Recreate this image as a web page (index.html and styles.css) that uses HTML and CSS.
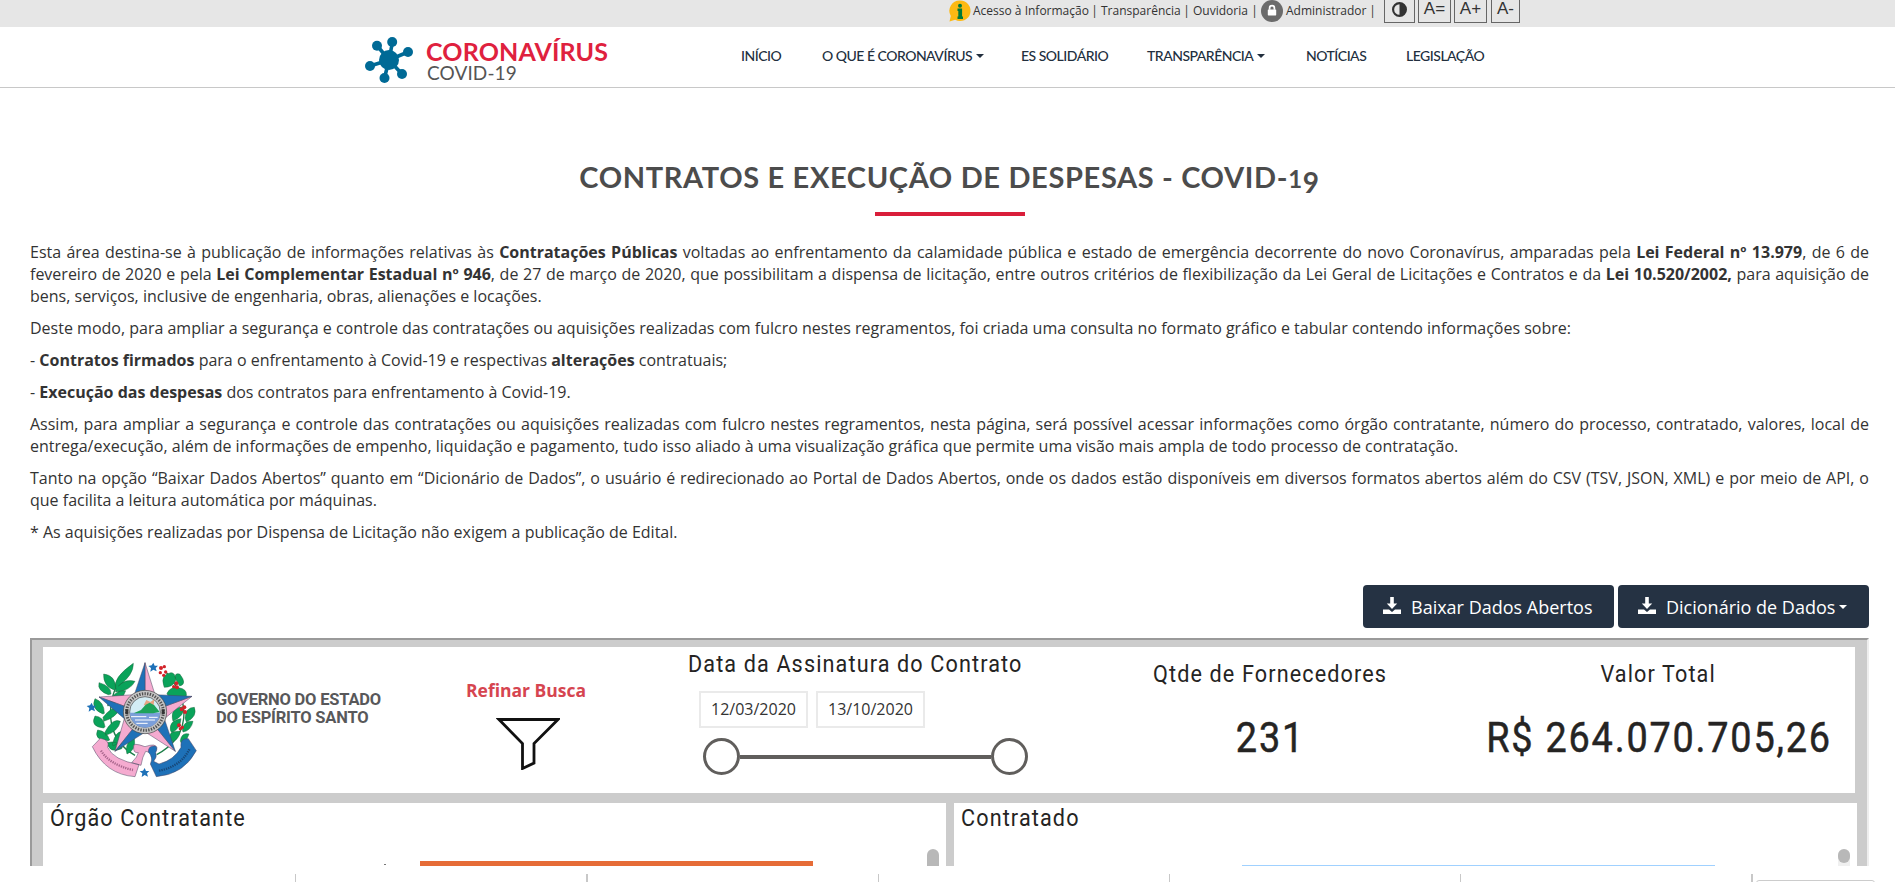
FILE: index.html
```html
<!DOCTYPE html>
<html lang="pt-br">
<head>
<meta charset="utf-8">
<title>Contratos e Execução de Despesas - COVID-19</title>
<link rel="stylesheet" href="styles.css">
</head>
<body>
<div class="topbar">
  <svg class="info-icon" viewBox="0 0 22 22"><path fill="#fdb913" d="M11.2.5a10.3 10.3 0 1 1-5 19.3L.5 21.5 1.800 16A10.300 10.300 0 0 1 11.200.5z"/><path fill="#00793a" d="M8.500 8.600h4.600v8h.9V19H8.500v-2.400h.8v-5.500h-.8z"/><circle cx="11" cy="5.800" r="2" fill="#00793a"/></svg>
  <a class="t-acesso">Acesso à Informação</a><i>|</i><a class="t-transp">Transparência</a><i>|</i><a class="t-ouv">Ouvidoria</a><i>|</i>
  <svg class="lock-icon" viewBox="0 0 22 22"><circle cx="11" cy="11" r="11" fill="#6b6b6b"/><rect x="6.800" y="9.400" width="8.400" height="6" rx=".6" fill="#fff"/><path d="M8.600 9.800V8a2.400 2.400 0 0 1 4.800 0v1.800" fill="none" stroke="#fff" stroke-width="1.700"/></svg>
  <a class="t-adm">Administrador</a><i>|</i>
  <div class="tools">
    <span class="tool w31"><svg class="contrast" viewBox="0 0 14 14"><circle cx="7" cy="7" r="6" fill="none" stroke="#333" stroke-width="2"/><path d="M7 1a6 6 0 0 1 0 12z" fill="#333"/></svg></span>
    <span class="tool w33">A=</span><span class="tool w33">A+</span><span class="tool w29">A-</span>
  </div>
</div>
<header class="header">
  <div class="brand">
    <svg class="virus" viewBox="0 0 48 46"><g stroke="#006a96" stroke-width="3.600" fill="#006a96"><path d="M24 23 27.500 5M24 23 12 8.500M24 23 43 15M24 23 5 29M24 23 19.500 41M24 23 37 37"/></g><g fill="#006a96"><circle cx="24" cy="23" r="10"/><circle cx="27.200" cy="5" r="5"/><circle cx="12" cy="8.800" r="5"/><circle cx="43" cy="15" r="5"/><circle cx="5" cy="29" r="5"/><circle cx="19.500" cy="41" r="5"/><circle cx="37" cy="37" r="5"/></g></svg>
    <div class="brand-text"><b>CORONAVÍRUS</b><span>COVID-19</span></div>
  </div>
  <nav class="nav">
    <a class="n1">INÍCIO</a><a class="n2">O QUE É CORONAVÍRUS<u></u></a><a class="n3">ES SOLIDÁRIO</a><a class="n4">TRANSPARÊNCIA<u></u></a><a class="n5">NOTÍCIAS</a><a class="n6">LEGISLAÇÃO</a>
  </nav>
</header>
<main class="content">
  <h1 class="title">CONTRATOS E EXECUÇÃO DE DESPESAS - COVID-<span class="one">1</span><span class="nine">9</span></h1>
  <div class="rule"></div>
  <div class="text">
    <p>Esta área destina-se à publicação de informações relativas às <b>Contratações Públicas</b> voltadas ao enfrentamento da calamidade pública e estado de emergência decorrente do novo Coronavírus, amparadas pela <b>Lei Federal nº 13.979</b>, de 6 de fevereiro de 2020 e pela <b>Lei Complementar Estadual nº 946</b>, de 27 de março de 2020, que possibilitam a dispensa de licitação, entre outros critérios de flexibilização da Lei Geral de Licitações e Contratos e da <b>Lei 10.520/2002,</b> para aquisição de bens, serviços, inclusive de engenharia, obras, alienações e locações.</p>
    <p>Deste modo, para ampliar a segurança e controle das contratações ou aquisições realizadas com fulcro nestes regramentos, foi criada uma consulta no formato gráfico e tabular contendo informações sobre:</p>
    <p>- <b>Contratos firmados</b> para o enfrentamento à Covid-19 e respectivas <b>alterações</b> contratuais;</p>
    <p>- <b>Execução das despesas</b> dos contratos para enfrentamento à Covid-19.</p>
    <p>Assim, para ampliar a segurança e controle das contratações ou aquisições realizadas com fulcro nestes regramentos, nesta página, será possível acessar informações como órgão contratante, número do processo, contratado, valores, local de entrega/execução, além de informações de empenho, liquidação e pagamento, tudo isso aliado à uma visualização gráfica que permite uma visão mais ampla de todo processo de contratação.</p>
    <p>Tanto na opção “Baixar Dados Abertos” quanto em “Dicionário de Dados”, o usuário é redirecionado ao Portal de Dados Abertos, onde os dados estão disponíveis em diversos formatos abertos além do CSV (TSV, JSON, XML) e por meio de API, o que facilita a leitura automática por máquinas.</p>
    <p>* As aquisições realizadas por Dispensa de Licitação não exigem a publicação de Edital.</p>
  </div>
  <div class="actions">
    <a class="btn"><svg viewBox="0 0 18 17"><path fill="#fff" d="M7.200 0h3.600v6.500h3.400L9 12 3.800 6.500h3.400zM0 12.500h6L9 15l3-2.500h6V17H0z"/></svg><span>Baixar Dados Abertos</span></a>
    <a class="btn"><svg viewBox="0 0 18 17"><path fill="#fff" d="M7.200 0h3.600v6.500h3.400L9 12 3.800 6.500h3.400zM0 12.500h6L9 15l3-2.500h6V17H0z"/></svg><span>Dicionário de Dados</span><u></u></a>
  </div>
  <section class="report">
    <div class="summary">
      <svg class="crest" viewBox="0 0 360 366">
        <g fill="none" stroke="#1b7d48" stroke-width="4"><path d="M150 292C75 250 50 160 110 50M215 290C310 240 325 140 245 45"/></g>
        <g fill="#0aa35a" stroke="#1d6b40" stroke-width="1.500">
          <path d="M92 92Q82 60 145 16Q146 52 100 84Q122 62 150 70Q136 98 92 102zM88 96Q54 84 56 48Q92 52 92 92zM70 110Q36 98 42 74Q80 84 78 108zM68 138Q92 92 122 98Q112 132 68 144zM54 168Q16 152 30 122Q58 132 58 166zM54 178Q84 140 104 152Q94 178 56 190zM56 210Q14 206 30 174Q56 176 60 206zM60 222Q84 178 106 190Q100 220 62 232zM70 248Q24 246 38 216Q66 220 74 246zM82 258Q94 214 116 222Q116 252 84 264zM110 272Q74 288 66 254Q96 246 112 268zM124 278Q124 246 148 240Q154 276 126 288z"/>
          <path d="M236 82Q226 50 258 44Q272 44 272 68Q262 88 238 88zM272 64Q266 44 284 48Q308 78 284 84zM246 106Q258 80 292 92Q310 100 302 120Q272 126 248 112zM262 180Q258 148 296 146Q300 172 264 190zM300 180Q302 148 328 148Q338 176 304 192zM256 216Q252 188 288 182Q286 212 260 224zM292 214Q298 186 324 190Q318 218 294 222zM250 244Q252 216 286 220Q282 248 254 254zM286 248Q290 222 312 228Q304 252 288 254z"/>
        </g>
        <g stroke="#4b4560" stroke-width="1.500" stroke-linejoin="round">
          <path fill="#f5abd0" d="M180 14 210 110 180 167zM321 115 238 182 180 167zM271 280 181 222 180 167zM90 280 118 182 180 167zM42 117 148 110 180 167z"/>
          <path fill="#1e71b8" d="M180 14 148 110 180 167zM321 115 210 110 180 167zM271 280 238 182 180 167zM90 280 181 222 180 167zM42 117 118 182 180 167z"/>
        </g>
        <circle cx="180" cy="162" r="65" fill="#c4c4c4" stroke="#444" stroke-width="2"/>
        <circle cx="180" cy="162" r="55" fill="none" stroke="#505050" stroke-width="9" stroke-dasharray="4 4"/>
        <path d="M121 154h9v14h-9zM230 154h9v14h-9z" fill="#333"/>
        <circle cx="180" cy="162" r="46" fill="#d3edf5" stroke="#444" stroke-width="2"/>
        <path fill="#7b9fda" d="M135 164h90a45 45 0 0 1-90 0z"/>
        <path fill="#e9a383" d="M176 142l8-16 12 6 12-8-2 18z"/>
        <path fill="#1da35a" d="M146 166l22-10 14-16 12-6 14 8 16 20-20 4z"/>
        <path stroke="#fff" stroke-width="3" d="M138 176h46M150 186h60M154 196h34M192 178h26"/>
        <g stroke="#4b4560" stroke-width="1.500" stroke-linejoin="round">
          <path fill="#f5abd0" d="M22 266 46 241Q76 246 68 268Q84 306 162 320L150 356Q62 350 22 266zM146 266q-4-14 34 0q34-12 34 4q0 22-32 10q-10 16-14 42l-28-8q18-18 20-30q-16 2-14-18z"/>
          <path fill="#1e71b8" d="M334 278 310 242Q284 240 288 268Q268 306 222 318L206 310Q218 296 212 284Q222 262 206 264Q190 264 190 282Q206 298 196 318L214 356Q296 350 334 278z"/>
        </g>
        <path fill="none" stroke="#a8658c" stroke-width="7" stroke-dasharray="4 3" d="M48 278q26 42 96 58"/>
        <path fill="none" stroke="#174879" stroke-width="7" stroke-dasharray="4 3" d="M222 338q66-12 92-66"/>
        <path fill="#1e71b8" d="M205 14l4 9 10 0-7 7 3 10-10-5-9 6 2-11-8-6 10-2zM20 134l4 9 10 0-7 7 3 10-10-5-9 6 2-11-8-6 10-2zM179 330l4 9 10 0-7 7 3 10-10-5-9 6 2-11-8-6 10-2z"/>
        <g fill="#d2232a"><circle cx="228" cy="30" r="6"/><circle cx="238" cy="26" r="5"/><circle cx="226" cy="44" r="5"/><circle cx="242" cy="42" r="5"/><circle cx="236" cy="52" r="5"/><circle cx="274" cy="76" r="6"/><circle cx="276" cy="88" r="6"/><circle cx="266" cy="86" r="5"/><circle cx="298" cy="148" r="6"/><circle cx="300" cy="162" r="6"/><circle cx="290" cy="154" r="6"/><circle cx="282" cy="202" r="6"/><circle cx="292" cy="208" r="5"/><circle cx="286" cy="212" r="5"/></g>
      </svg>
      <div class="gov"><span>GOVERNO DO ESTADO</span><span>DO ESPÍRITO SANTO</span></div>
      <div class="refine"><b>Refinar Busca</b><svg viewBox="0 0 64 54"><path d="M3 3.500H62L38 27.500V47L26.500 52.500V27.500z" fill="none" stroke="#111" stroke-width="2.800"/></svg></div>
      <div class="dates">
        <div class="din">Data da Assinatura do Contrato</div>
        <div class="inputs"><span>12/03/2020</span><span>13/10/2020</span></div>
        <div class="slider"><i></i><em></em><i></i></div>
      </div>
      <div class="kpi k1"><div class="din">Qtde de Fornecedores</div><div class="num">231</div></div>
      <div class="kpi k2"><div class="din">Valor Total</div><div class="num">R$ 264.070.705,26</div></div>
    </div>
    <div class="charts">
      <div class="chart"><div class="din">Órgão Contratante</div><div class="bar-orange"></div><div class="accent"></div><div class="thumb"></div></div>
      <div class="chart"><div class="din">Contratado</div><div class="bar-blue"></div><div class="track"></div><div class="thumb short"></div></div>
    </div>
  </section>
</main>
<div class="ticks"><i class="a"></i><i class="b"></i><i class="c"></i><i class="d"></i><i class="e"></i><i class="f"></i><span></span></div>
</body>
</html>
```
FILE: styles.css
```css
* { box-sizing: border-box; }
body { margin: 0; height: 882px; overflow: hidden; background: #fff; color: #333; font-family: "Open Sans", sans-serif; }
i, em { font-style: normal; }
u { text-decoration: none; display: inline-block; border: 4px solid transparent; border-top-color: currentColor; border-bottom: 0; }
.topbar { height: 27px; background: #e6e6e6; display: flex; padding-left: 949px; font-size: 12px; line-height: 21px; white-space: nowrap; }
.topbar i { width: 13px; text-align: center; }
.info-icon { width: 22px; height: 22px; margin-right: 2px; }
.lock-icon { width: 22px; height: 22px; margin: 0 3px 0 0; }
.t-acesso { width: 115px; }
.t-transp { width: 79px; }
.t-ouv { width: 55px; }
.t-adm { width: 80px; }
.tools { display: flex; gap: 3px; margin-left: 5px; font: 17px/17px "Liberation Sans", sans-serif; color: #333; }
.tool { height: 23px; border: 1px solid #666; border-top: 0; text-align: center; }
.w31 { width: 31px; } .w33 { width: 33px; } .w29 { width: 29px; margin-left: 1px; }
.contrast { width: 15px; height: 15px; display: block; margin: 2px auto 0; }
.header { height: 61px; border-bottom: 1px solid #c8c8c8; display: flex; padding-left: 365px; }
.brand { width: 376px; display: flex; padding-top: 10px; }
.virus { width: 48px; height: 46px; margin-right: 13px; }
.brand-text { font-family: Lato, sans-serif; display: flex; flex-direction: column; }
.brand-text b { color: #df213e; font-size: 25px; line-height: 28px; letter-spacing: .15px; }
.brand-text span { color: #555; font-size: 19px; line-height: 15px; margin-left: 1px; letter-spacing: .1px; }
.nav { display: flex; font: 500 14px/20px Lato, sans-serif; letter-spacing: -.5px; color: #222f3e; padding-top: 19px; white-space: nowrap; }
.nav u { margin: 0 0 3px 4px; }
.n1 { width: 81px; } .n2 { width: 199px; } .n3 { width: 126px; } .n4 { width: 159px; } .n5 { width: 100px; }
.content { padding: 0 26px 0 30px; }
.title { margin: 69px 0 0; height: 40px; font: 700 29px/40px Lato, sans-serif; color: #4c4c4c; text-align: center; letter-spacing: .65px; white-space: nowrap; }
.one { font-size: 24px; } .nine { font-size: 28px; vertical-align: -5px; line-height: 20px; }
.rule { width: 150px; height: 4px; background: #d91e3a; margin: 15px auto 0; }
.text { padding-top: 25px; font-size: 16px; line-height: 22px; text-align: justify; }
.text p { margin: 0 0 10px; }
.actions { display: flex; justify-content: flex-end; gap: 4px; margin-top: 42px; }
.btn { width: 251px; height: 43px; background: #253243; border-radius: 4px; color: #fff; font-size: 18px; display: flex; align-items: center; padding-left: 20px; white-space: nowrap; }
.btn svg { width: 18px; height: 17px; margin: 0 10px 2px 0; }
.btn u { margin-left: 4px; }
.report { margin-top: 10px; height: 228px; background: #ccc; border: 2px solid #9a9a9a; border-right-color: #eee; border-bottom: 0; padding: 7px 10px 0 11px; overflow: hidden; }
.summary { height: 146px; width: 1812px; background: #fff; display: flex; }
.crest { width: 120px; height: 122px; margin: 11px 11px 0 42px; }
.gov { width: 250px; padding-top: 44px; font: 700 16.500px/18px Roboto, sans-serif; color: #58585a; letter-spacing: -.2px; display: flex; flex-direction: column; white-space: nowrap; }
.refine { width: 222px; padding-top: 31px; color: #d64550; font-size: 17.500px; line-height: 24px; }
.refine svg { display: block; width: 64px; height: 54px; margin: 14px 0 0 30px; }
.din { width: max-content; font: 24px/30px Roboto, sans-serif; color: #252423; white-space: nowrap; letter-spacing: 1.250px; transform: scaleX(.9); transform-origin: 0 50%; }
.dates { width: 464px; padding-top: 2px; }
.inputs { display: flex; gap: 8px; margin: 12px 0 0 11px; }
.inputs span { width: 109px; height: 37px; border: 2px solid #eaeaea; text-align: center; font: 16px/33px "Open Sans", sans-serif; }
.slider { display: flex; align-items: center; margin: 10px 0 0 15px; }
.slider i { width: 37px; height: 37px; border: 3px solid #605e5c; border-radius: 50%; }
.slider em { width: 251px; height: 4px; background: #605e5c; }
.kpi { padding: 12px 0 0 2px; display: flex; flex-direction: column; align-items: center; }
.kpi .din, .num { transform-origin: 50% 50%; }
.k1 { width: 235px; margin-right: 97px; }
.k2 { width: 347px; }
.num { width: max-content; font: 42px/50px Roboto, sans-serif; color: #252423; margin-top: 24px; white-space: nowrap; letter-spacing: 2px; transform: scaleX(.9); -webkit-text-stroke: .5px #252423; }
.charts { display: flex; gap: 8px; margin-top: 10px; }
.chart { position: relative; width: 903px; height: 63px; background: #fff; overflow: hidden; padding: 0 7px; flex-shrink: 0; }
.bar-orange { position: absolute; left: 377px; top: 58px; width: 393px; height: 5px; background: #e66c37; }
.accent { position: absolute; left: 341px; top: 61px; width: 2px; height: 1px; background: #777; }
.bar-blue { position: absolute; left: 288px; top: 62px; width: 473px; height: 1px; background: #a0d1ff; }
.thumb { position: absolute; left: 884px; top: 46px; width: 12px; height: 30px; border-radius: 6px; background: #b8b8b8; }
.track { position: absolute; left: 884px; top: 46px; width: 12px; height: 17px; background: #f0f0f0; border-radius: 6px 6px 0 0; }
.short { height: 14px; }
.ticks { display: flex; height: 16px; padding-top: 8px; }
.ticks i { height: 8px; width: 1px; background: #c8c8c8; }
.a { margin-left: 295px; } .b, .c, .d, .e, .f { margin-left: 290px; }
.ticks .b, .ticks .f { width: 2px; }
.ticks span { width: 119px; height: 10px; margin: 6px 0 0 3px; border: 1px solid #ccc; border-radius: 3px; }
```
